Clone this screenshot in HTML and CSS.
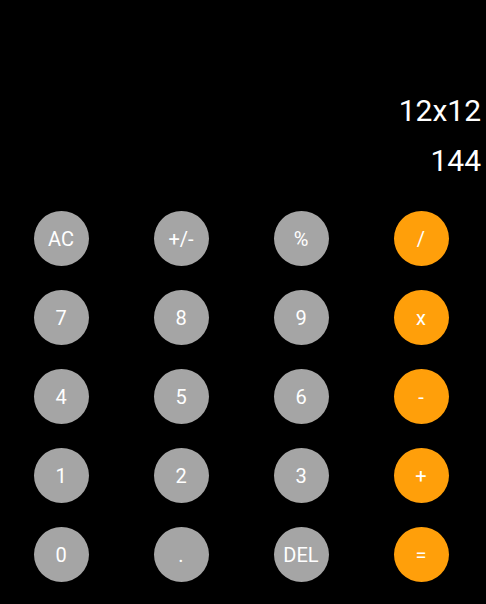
FILE: index.html
```html
<!DOCTYPE html>
<html>
<head>
<meta charset="utf-8">
<link rel="stylesheet" href="styles.css">
</head>
<body>
<div class="calc">
  <div class="display">
    <div class="expr">12x12</div>
    <div class="result">144</div>
  </div>
  <div class="keys">
    <button class="key">AC</button>
    <button class="key">+/-</button>
    <button class="key">%</button>
    <button class="key op">/</button>
    <button class="key">7</button>
    <button class="key">8</button>
    <button class="key">9</button>
    <button class="key op">x</button>
    <button class="key">4</button>
    <button class="key">5</button>
    <button class="key">6</button>
    <button class="key op">-</button>
    <button class="key">1</button>
    <button class="key">2</button>
    <button class="key">3</button>
    <button class="key op">+</button>
    <button class="key">0</button>
    <button class="key">.</button>
    <button class="key">DEL</button>
    <button class="key op">=</button>
  </div>
</div>
</body>
</html>
```
FILE: styles.css
```css
html, body {
  margin: 0;
  padding: 0;
  background: #000;
  height: 100%;
}
body {
  font-family: Roboto, "Liberation Sans", sans-serif;
  color: #fff;
}
.calc {
  width: 486px;
}
.display {
  padding-top: 94px;
  padding-right: 5px;
  text-align: right;
}
.expr, .result {
  font-size: 30px;
  line-height: 34px;
}
.result {
  margin-top: 16px;
}
.keys {
  margin-top: 33px;
  padding-left: 1px;
  display: grid;
  grid-template-columns: repeat(4, 120px);
  row-gap: 24px;
  justify-items: center;
}
.key {
  width: 55px;
  height: 55px;
  border-radius: 50%;
  border: none;
  padding: 0;
  background: #a5a5a5;
  color: #fff;
  font-family: Roboto, "Liberation Sans", sans-serif;
  font-size: 20px;
  display: flex;
  align-items: center;
  justify-content: center;
}
.key.op {
  background: #ff9f0a;
}
```
